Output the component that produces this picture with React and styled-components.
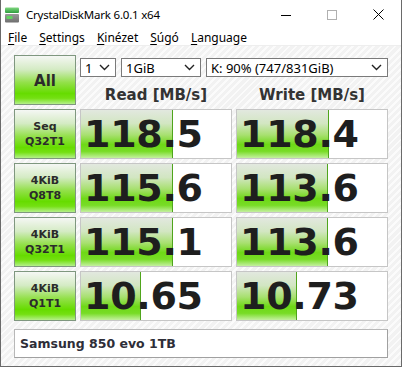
import { Fragment } from "react";
import styled, { createGlobalStyle } from "styled-components";

const Global = createGlobalStyle`
  body {
    margin: 0;
    overflow: hidden;
    background: #ffffff;
  }
`;

const Ventana = styled.div`
  width: 402px;
  height: 367px;
  box-sizing: border-box;
  border: 1px solid #6a6a6a;
  border-top: none;
  background: #ffffff;
  display: flex;
  flex-direction: column;
  font-family: "Noto Sans", "DejaVu Sans", sans-serif;
`;

const BarraTitulo = styled.div`
  height: 29px;
  display: flex;
  align-items: center;
  padding-left: 3px;
  font-size: 12px;
  color: #000;
`;

const Titulo = styled.span`
  margin-left: 6px;
  flex: 1;
  font-size: 11.5px;
  letter-spacing: -0.2px;
`;

const Control = styled.div`
  width: 46px;
  height: 29px;
  display: flex;
  align-items: center;
  justify-content: center;
`;

const BarraMenu = styled.div`
  height: 16px;
  display: flex;
  align-items: center;
  font-size: 12px;
  color: #000;

  span {
    padding: 0 5px 0 7px;
  }
  u {
    text-underline-offset: 2px;
  }
`;

const Cuerpo = styled.div`
  flex: 1;
  padding: 9px 13px 0 13px;
  background: repeating-linear-gradient(
    135deg,
    #f2f2f2 0px,
    #f2f2f2 3px,
    #fbfbfb 3px,
    #fbfbfb 5px
  );
  border-top: 1px solid #eeeeee;
`;

const Rejilla = styled.div`
  display: grid;
  grid-template-columns: 62px 152px 152px;
  grid-auto-rows: 50px;
  column-gap: 4px;
  row-gap: 4px;
`;

const BotonVerde = styled.div`
  box-sizing: border-box;
  border: 1px solid #7f977f;
  background: linear-gradient(
    to bottom,
    #f5f7f4 0%,
    #d4ebc4 28%,
    #93e04a 55%,
    #66dc00 78%,
    #74e012 88%,
    #b4f08a 100%
  );
  display: flex;
  flex-direction: column;
  align-items: center;
  justify-content: center;
  font-family: "DejaVu Sans", Verdana, sans-serif;
  font-weight: bold;
  color: #2b2b2b;
  font-size: ${(p) => (p.$grande ? "15px" : "11px")};
  line-height: ${(p) => (p.$grande ? "18px" : "15px")};
  padding-top: ${(p) => (p.$grande ? "2px" : "0")};
`;

const Controles = styled.div`
  grid-column: 2 / 4;
  display: flex;
  flex-direction: column;
`;

const FilaSelect = styled.div`
  margin-top: 3px;
  display: flex;
  gap: 5px;
  height: 19px;
`;

const Select = styled.div`
  box-sizing: border-box;
  width: ${(p) => p.$ancho}px;
  height: 19px;
  border: 1px solid #7a7a7a;
  background: #fff;
  display: flex;
  align-items: center;
  justify-content: space-between;
  padding: 0 5px 0 4px;
  font-size: 13px;
  color: #000;
`;

const Cabeceras = styled.div`
  margin-top: 9px;
  display: grid;
  grid-template-columns: 152px 152px;
  column-gap: 4px;
`;

const Cabecera = styled.div`
  text-align: center;
  font-family: "DejaVu Sans", Verdana, sans-serif;
  font-weight: bold;
  font-size: 15px;
  line-height: 18px;
  color: #333333;
`;

const Celda = styled.div`
  position: relative;
  box-sizing: border-box;
  border: 1px solid #c6c6c6;
  background: #ffffff;
  display: flex;
  align-items: center;
  padding-left: 3px;
  overflow: hidden;
`;

const Medidor = styled.div`
  position: absolute;
  left: 0;
  top: 0;
  bottom: 0;
  border-right: 1px solid #4fa51c;
  background: linear-gradient(
    to bottom,
    #e2e8df 0%,
    #d2e6c2 28%,
    #a8e070 52%,
    #6ed816 72%,
    #78dc26 86%,
    #c4f0a0 100%
  );
`;

const Valor = styled.span`
  position: relative;
  font-family: "DejaVu Sans", Verdana, sans-serif;
  font-weight: bold;
  font-size: 38px;
  line-height: 40px;
  color: #1e1e1e;
  letter-spacing: -0.3px;
`;

const Comentario = styled.div`
  margin-top: 8px;
  box-sizing: border-box;
  height: 29px;
  width: 374px;
  border: 1px solid #b8b8b8;
  border-right-color: #a0a0a0;
  border-bottom-color: #a0a0a0;
  background: #fff;
  display: flex;
  align-items: center;
  padding-left: 5px;
  font-family: "DejaVu Sans", Verdana, sans-serif;
  font-weight: bold;
  font-size: 12.5px;
  color: #2e2e38;
`;

const Flecha = () => (
  <svg width="11" height="7" viewBox="0 0 11 7">
    <path d="M1 1 L5.5 5.5 L10 1" fill="none" stroke="#222" strokeWidth="1.4" />
  </svg>
);

const Icono = () => (
  <svg width="16" height="16" viewBox="0 0 16 16">
    <defs>
      <linearGradient id="gv" x1="0" y1="0" x2="0" y2="1">
        <stop offset="0" stopColor="#7fd67f" />
        <stop offset="1" stopColor="#2e9e3e" />
      </linearGradient>
      <linearGradient id="gg" x1="0" y1="0" x2="0" y2="1">
        <stop offset="0" stopColor="#9a9a9a" />
        <stop offset="1" stopColor="#6e6e6e" />
      </linearGradient>
    </defs>
    <rect x="1" y="0.5" width="14" height="5.5" rx="1" fill="url(#gv)" />
    <rect x="1" y="7" width="14" height="8.5" rx="1" fill="url(#gg)" />
    <rect x="2.5" y="9" width="6" height="3" fill="#5fd35f" />
  </svg>
);

const filas = [
  { a: "Seq", b: "Q32T1", r: 118.5, w: 118.4, rt: "118.5", wt: "118.4" },
  { a: "4KiB", b: "Q8T8", r: 115.6, w: 113.6, rt: "115.6", wt: "113.6" },
  { a: "4KiB", b: "Q32T1", r: 115.1, w: 113.6, rt: "115.1", wt: "113.6" },
  { a: "4KiB", b: "Q1T1", r: 10.65, w: 10.73, rt: "10.65", wt: "10.73" },
];

const ancho = (v) => Math.round(27.6 + 30.6 * Math.log10(v));

function Resultado({ valor, texto }) {
  return (
    <Celda>
      <Medidor style={{ width: ancho(valor) }} />
      <Valor>{texto}</Valor>
    </Celda>
  );
}

export default function App() {
  return (
    <>
      <Global />
      <Ventana>
        <BarraTitulo>
          <Icono />
          <Titulo>CrystalDiskMark 6.0.1 x64</Titulo>
          <Control>
            <svg width="10" height="10" viewBox="0 0 10 10">
              <path d="M0 5.5 H10" stroke="#000" strokeWidth="1" />
            </svg>
          </Control>
          <Control>
            <svg width="10" height="10" viewBox="0 0 10 10">
              <rect x="0.5" y="0.5" width="9" height="9" fill="none" stroke="#b0b0b0" />
            </svg>
          </Control>
          <Control>
            <svg width="11" height="11" viewBox="0 0 11 11">
              <path d="M0.5 0.5 L10.5 10.5 M10.5 0.5 L0.5 10.5" stroke="#000" strokeWidth="1" />
            </svg>
          </Control>
        </BarraTitulo>
        <BarraMenu>
          <span><u>F</u>ile</span>
          <span><u>S</u>ettings</span>
          <span><u>K</u>inézet</span>
          <span><u>S</u>úgó</span>
          <span><u>L</u>anguage</span>
        </BarraMenu>
        <Cuerpo>
          <Rejilla>
            <BotonVerde $grande>All</BotonVerde>
            <Controles>
              <FilaSelect>
                <Select $ancho={36}>1<Flecha /></Select>
                <Select $ancho={80}>1GiB<Flecha /></Select>
                <Select $ancho={182}>K: 90% (747/831GiB)<Flecha /></Select>
              </FilaSelect>
              <Cabeceras>
                <Cabecera>Read [MB/s]</Cabecera>
                <Cabecera>Write [MB/s]</Cabecera>
              </Cabeceras>
            </Controles>
            {filas.map((f, i) => (
              <Fragment key={i}>
                <BotonVerde>
                  <span>{f.a}</span>
                  <span>{f.b}</span>
                </BotonVerde>
                <Resultado valor={f.r} texto={f.rt} />
                <Resultado valor={f.w} texto={f.wt} />
              </Fragment>
            ))}
          </Rejilla>
          <Comentario>Samsung 850 evo 1TB</Comentario>
        </Cuerpo>
      </Ventana>
    </>
  );
}
